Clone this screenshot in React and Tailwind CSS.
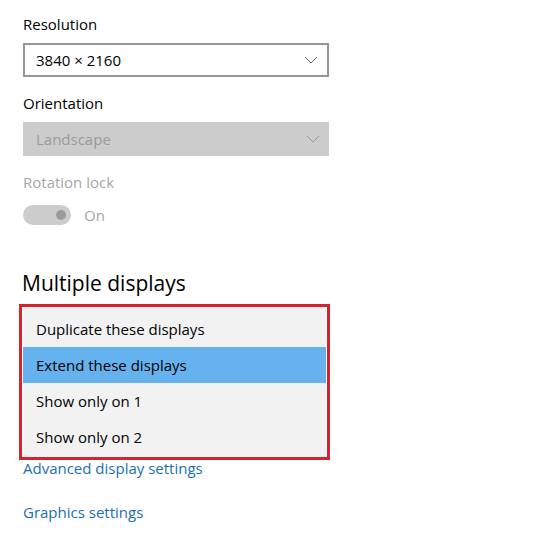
import React from "react";

function Chevron({ className }) {
  return (
    <svg width="14" height="8" viewBox="0 0 14 8" className={className}>
      <path d="M1 1 L7 7 L13 1" fill="none" stroke="currentColor" strokeWidth="1" />
    </svg>
  );
}

function Label({ children, muted }) {
  return (
    <div className={`h-5 text-[15px] leading-5 ${muted ? "text-[#a6a6a6]" : "text-black"}`}>
      {children}
    </div>
  );
}

export default function App() {
  const options = [
    "Duplicate these displays",
    "Extend these displays",
    "Show only on 1",
    "Show only on 2",
  ];

  return (
    <div
      className="w-[542px] h-[545px] bg-white overflow-hidden"
      style={{ fontFamily: '"Open Sans", "Noto Sans", sans-serif' }}
    >
      <div className="pl-[23px] pt-[14px]">
        <Label>Resolution</Label>
        <div className="mt-[9px] w-[306px] h-[34px] border-2 border-[#979797] bg-white flex items-center justify-between pl-[11px] pr-[9px]">
          <span className="text-[15px] text-black">3840 × 2160</span>
          <Chevron className="text-[#6b6b6b]" />
        </div>

        <div className="mt-[16px]">
          <Label>Orientation</Label>
        </div>
        <div className="mt-[9px] w-[306px] h-[34px] bg-[#cccccc] flex items-center justify-between pl-[13px] pr-[9px]">
          <span className="text-[15px] text-[#9a9a9a]">Landscape</span>
          <Chevron className="text-[#9a9a9a]" />
        </div>

        <div className="mt-[16px]">
          <Label muted>Rotation lock</Label>
        </div>
        <div className="mt-[13px] flex items-center gap-[13px]">
          <div className="w-[48px] h-[20px] rounded-full bg-[#cccccc] flex items-center justify-end pr-[5px]">
            <div className="w-[10px] h-[10px] rounded-full bg-[#9b9b9b]" />
          </div>
          <span className="text-[15px] text-[#a6a6a6] leading-5">On</span>
        </div>

        <div className="mt-[44px] -ml-[1px] text-[21px] leading-7 text-black">Multiple displays</div>

        <div className="mt-[7px] -ml-[4px] w-[311px] border-[3px] border-[#d3232f] bg-white">
          <div className="mx-[1px] bg-[#f2f2f2] pt-[4px] pb-[2px]">
            {options.map((o, i) => (
              <div
                key={o}
                className={`h-[36px] flex items-center pl-[13px] text-[15px] text-black ${
                  i === 1 ? "bg-[#66b2ee]" : ""
                }`}
              >
                {o}
              </div>
            ))}
          </div>
        </div>

        <div className="-mt-[2px] text-[15px] leading-5 text-[#1a6fb3]">Advanced display settings</div>
        <div className="mt-[24px] text-[15px] leading-5 text-[#1a6fb3]">Graphics settings</div>
      </div>
    </div>
  );
}
